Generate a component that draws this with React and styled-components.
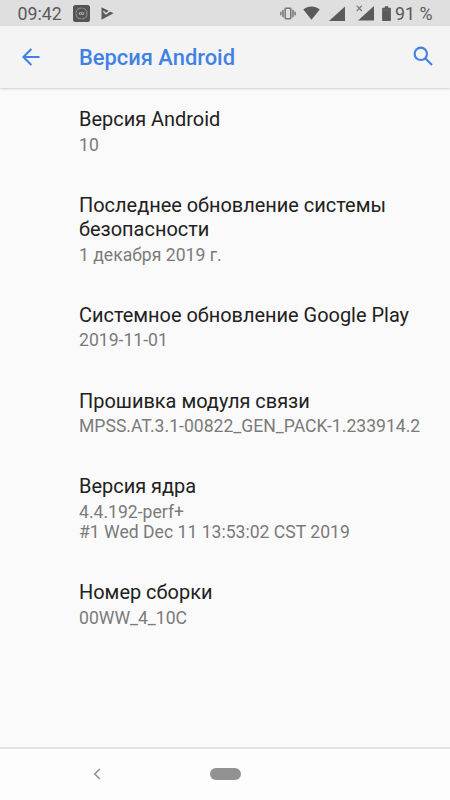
import React from "react";
import styled, { createGlobalStyle, ThemeProvider } from "styled-components";

const theme = {
  accent: "#3f82e4",
  status: "#dfdfdf",
  bar: "#f4f4f4",
  page: "#fafafa",
  icon: "#5a5a5a",
  title: "#212121",
  summary: "#7a7a7a",
};

const GlobalStyle = createGlobalStyle`
  * {
    box-sizing: border-box;
  }
  body {
    margin: 0;
    font-family: Roboto, "Noto Sans", sans-serif;
  }
`;

const Screen = styled.div`
  display: flex;
  flex-direction: column;
  width: 100%;
  height: 100vh;
  overflow: hidden;
  background: ${(props) => props.theme.page};
`;

const StatusBar = styled.div`
  display: flex;
  flex: none;
  align-items: center;
  justify-content: space-between;
  height: 26px;
  padding: 0 17.5px;
  background: ${(props) => props.theme.status};
  color: ${(props) => props.theme.icon};
  font-size: 17.8px;
  line-height: 26px;
  svg {
    display: block;
    flex: none;
  }
`;

const StatusGroup = styled.div`
  display: flex;
  align-items: center;
  gap: ${(props) => props.$gap}px;
`;

const StatusText = styled.span`
  padding-top: 2px;
  white-space: nowrap;
`;

const AppBar = styled.header`
  display: flex;
  flex: none;
  align-items: center;
  height: 61.5px;
  padding: 0 17px 0 21px;
  background: ${(props) => props.theme.bar};
  color: ${(props) => props.theme.accent};
  box-shadow: 0 1px 2px rgba(0, 0, 0, 0.18);
  h1 {
    flex: 1;
    margin: 3px 0 0 39px;
    font-size: 21.9px;
    font-weight: 500;
    line-height: 28px;
  }
`;

const IconButton = styled.button`
  display: flex;
  padding: 0;
  border: 0;
  background: none;
  color: inherit;
`;

const SearchButton = styled(IconButton)`
  padding-bottom: 2px;
`;

const List = styled.main`
  flex: 1;
  padding: 1.2px 20px 0 79px;
`;

const Item = styled.section`
  padding: 18.8px 0 18.9px;
  h2 {
    margin: 0;
    color: ${(props) => props.theme.title};
    font-size: 19.95px;
    font-weight: 400;
    line-height: 24px;
  }
  p {
    margin: 3.5px 0 0;
    color: ${(props) => props.theme.summary};
    font-size: 17.6px;
    line-height: 20.5px;
    white-space: pre-line;
  }
`;

const NavBar = styled.nav`
  display: grid;
  flex: none;
  grid-template-columns: 1fr 31px 1fr;
  align-items: center;
  height: 53px;
  padding-bottom: 2px;
  border-top: 2px solid #e2e2e2;
  background: #fdfdfd;
  color: #929292;
`;

const BackKey = styled(IconButton)`
  padding-left: 93px;
`;

const HomePill = styled.div`
  height: 12px;
  border-radius: 6px;
  background: currentColor;
`;

const items = [
  { title: "Версия Android", summary: "10" },
  {
    title: "Последнее обновление системы безопасности",
    summary: "1 декабря 2019 г.",
  },
  { title: "Системное обновление Google Play", summary: "2019-11-01" },
  {
    title: "Прошивка модуля связи",
    summary: "MPSS.AT.3.1-00822_GEN_PACK-1.233914.2",
  },
  {
    title: "Версия ядра",
    summary: "4.4.192-perf+\n#1 Wed Dec 11 13:53:02 CST 2019",
  },
  { title: "Номер сборки", summary: "00WW_4_10C" },
];

const CameraIcon = () => (
  <svg width="17" height="17" viewBox="0 0 17 17" fill="none">
    <rect width="17" height="17" rx="2.5" fill="#545454" />
    <circle cx="8.5" cy="8.5" r="5.5" stroke="#a2a2a2" strokeWidth="0.9" strokeDasharray="7.8 1" />
    <rect x="5.7" y="7.2" width="5.6" height="2.6" rx="0.8" fill="#a8a8a8" />
    <path d="M7 8.5h1M9 8.5h1" stroke="#545454" strokeWidth="0.8" />
  </svg>
);

// play triangle with a tick cut through to the right edge
const PlayCheckIcon = () => (
  <svg width="13" height="13" viewBox="0 0 13 13">
    <path d="M0.5 0.3L12.5 6.3L0.5 12.7Z" fill="currentColor" />
    <path d="M2.4 4.2L5 6.9L10.8 2.4" fill="none" stroke="#dfdfdf" strokeWidth="1.4" />
  </svg>
);

const VibrateIcon = () => (
  <svg width="16" height="13" viewBox="0 0 16 13" fill="none" stroke="#777" strokeWidth="1.5">
    <rect x="5.2" y="1.3" width="5.6" height="10.4" rx="0.6" />
    <path d="M3 2.8v7.4M13 2.8v7.4M0.9 4.7v3.6M15.1 4.7v3.6" />
  </svg>
);

const WifiIcon = () => (
  <svg width="17" height="14" viewBox="0 0 17 14" fill="currentColor">
    <path d="M8.5 13.7L0.3 3.5C2.6 1.5 5.4 0.4 8.5 0.4s5.9 1.1 8.2 3.1Z" />
  </svg>
);

const SignalIcon = () => (
  <svg width="16" height="15" viewBox="0 0 16 15" fill="currentColor">
    <path d="M16 0.5v14.5H0Z" />
  </svg>
);

const NoSignalIcon = () => (
  <svg width="18" height="16" viewBox="0 0 18 16" fill="currentColor">
    <path d="M18 1v14.5H2Z" />
    <path d="M0.8 0.6l5 5.4M5.8 0.6l-5 5.4" stroke="#777" strokeWidth="1.2" />
  </svg>
);

const BatteryIcon = () => (
  <svg width="9" height="15" viewBox="0 0 9 15" fill="currentColor">
    <path d="M2.8 0.3h3.4v1.5H8.2a.7.7 0 0 1 .7.7v11.8a.7.7 0 0 1-.7.7H.8a.7.7 0 0 1-.7-.7v-11.8a.7.7 0 0 1 .7-.7h2Z" />
    <path d="M0.5 4.2h8" stroke="#757575" strokeWidth="0.7" />
  </svg>
);

const ArrowIcon = () => (
  <svg width="19" height="18" viewBox="0 0 19 18" fill="none" stroke="currentColor" strokeWidth="2">
    <path d="M18.5 9H2.4M10.4 1L2.4 9L10.4 17" />
  </svg>
);

const SearchIcon = () => (
  <svg width="20" height="20" viewBox="0 0 20 20" fill="none" stroke="currentColor" strokeWidth="2.1">
    <circle cx="7.8" cy="7.8" r="6.2" />
    <path d="M12.2 12.2L19 19" />
  </svg>
);

const ChevronIcon = () => (
  <svg width="8" height="12" viewBox="0 0 8 12" fill="none" stroke="currentColor" strokeWidth="1.7">
    <path d="M6.8 1L1.8 6L6.8 11" />
  </svg>
);

const Space = styled.span`
  width: ${(props) => props.$w}px;
`;

const App = () => {
  return (
    <ThemeProvider theme={theme}>
      <GlobalStyle />
      <Screen>
        <StatusBar>
          <StatusGroup $gap={11}>
            <StatusText>09:42</StatusText>
            <CameraIcon />
            <PlayCheckIcon />
          </StatusGroup>
          <StatusGroup $gap={0}>
            <VibrateIcon />
            <Space $w={7.5} />
            <WifiIcon />
            <Space $w={8.5} />
            <SignalIcon />
            <Space $w={11} />
            <NoSignalIcon />
            <Space $w={8} />
            <BatteryIcon />
            <Space $w={4.5} />
            <StatusText>91 %</StatusText>
          </StatusGroup>
        </StatusBar>
        <AppBar>
          <IconButton aria-label="Назад">
            <ArrowIcon />
          </IconButton>
          <h1>Версия Android</h1>
          <SearchButton aria-label="Поиск">
            <SearchIcon />
          </SearchButton>
        </AppBar>
        <List>
          {items.map((item) => (
            <Item key={item.title}>
              <h2>{item.title}</h2>
              <p>{item.summary}</p>
            </Item>
          ))}
        </List>
        <NavBar>
          <BackKey aria-label="Назад">
            <ChevronIcon />
          </BackKey>
          <HomePill />
        </NavBar>
      </Screen>
    </ThemeProvider>
  );
};

export default App;
